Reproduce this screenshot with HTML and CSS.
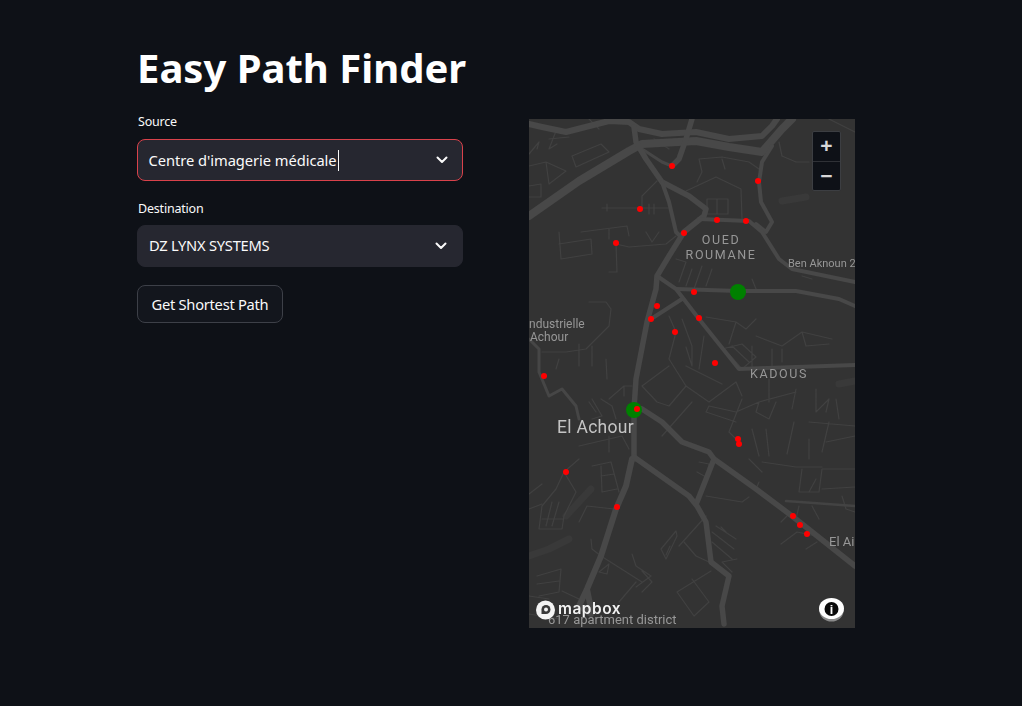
FILE: index.html
```html
<!DOCTYPE html>
<html lang="en">
<head>
<meta charset="utf-8">
<title>Easy Path Finder</title>
<link rel="stylesheet" href="styles.css">
</head>
<body>
<main class="app">
  <section class="controls">
    <h1 class="title">Easy Path Finder</h1>
    <div class="field">
      <label class="label">Source</label>
      <div class="select select-focus">
        <span class="value">Centre d'imagerie médicale</span><span class="caret"></span>
        <svg class="chevron" viewBox="0 0 12 8"><path d="M1.500 1.500 6 6l4.500-4.500" /></svg>
      </div>
    </div>
    <div class="field">
      <label class="label">Destination</label>
      <div class="select select-plain">
        <span class="value">DZ LYNX SYSTEMS</span>
        <svg class="chevron" viewBox="0 0 12 8"><path d="M1.500 1.500 6 6l4.500-4.500" /></svg>
      </div>
    </div>
    <button class="button">Get Shortest Path</button>
  </section>
  <section class="map">
    <svg class="map-svg" viewBox="0 0 326 509" width="326" height="509">
      <rect width="326" height="509" fill="#333333"/>
      <g class="soft">
      <g class="water">
        <path d="M37 397 62 370"/>
        <path d="M0 437 20 430 40 420"/>
        <path d="M253 82 277 78"/>
        <path d="M310 265 326 262"/>
      </g>
      <g class="minor">
        <path d="M43 37 47 48 80 33 72 25ZM0 47 17 43 20 65 37 52 17 43M0 67 12 65 12 78H0M0 35 10 23 8 30M27 12 20 30 28 25"/>
        <path d="M73 89H139M78 85V92M120 85V95M125 85V95M113 88V77L128 62"/>
        <path d="M30 113 32 140 63 135 62 120 30 125M52 113 98 107 100 117M87 125 88 153H80M87 125 100 128 137 125 147 117M117 113 123 123 130 113M80 110V120"/>
        <path d="M157 72 187 58 212 70 213 100M170 40 193 38 220 43 230 50M170 40 173 53 168 63M178 80H199V95H178ZM188 80V95"/>
        <path d="M250 23 253 37 267 43 280 43M300 0 326 13"/>
        <path d="M147 140 157 143 150 163M163 150 157 167M173 147 165 170M183 150 177 167M223 160 227 170M273 157 283 160"/>
        <path d="M60 183H77L82 190 80 207 57 230 37 233H13M50 225V247M63 227V247M77 240 78 260M80 280 95 267H103M95 267V277M72 280 83 287 87 300M60 283 67 293M30 240 27 250"/>
        <path d="M140 197 147 213 140 240 157 267 180 283 207 263 213 277M113 267 140 247M113 267 128 283 140 287 157 267M157 247 193 265M175 217 170 250M163 227V247L157 228M153 200 163 227"/>
        <path d="M177 198 207 203 217 210 227 200M193 230 213 225 227 238 213 250 197 232M203 227 220 243M207 203 200 225M227 217 253 227 273 213 303 220M253 230V243M273 213 277 227 300 225M243 230V250M223 227V250"/>
        <path d="M180 287 207 293 230 283 267 273M180 287 177 293 207 303M230 283 227 293 240 300 247 283M240 260V283M267 270 263 290M287 270V293L300 280 297 293M307 280 310 300M213 280 200 313 207 320M223 310 230 337M237 310 240 337"/>
        <path d="M163 283 133 317M50 327 93 317 100 330M80 317V333M63 280 73 297 63 300"/>
        <path d="M297 323 326 317M280 303 326 307M300 303 293 333M265 303 258 335M280 320V340"/>
        <path d="M50 340 35 353 27 370 13 387 10 410H33L35 397 47 373 35 353M23 383 17 407M30 383 23 407M13 400H35"/>
        <path d="M63 347 82 343 90 373M72 347 73 373 88 370M72 357 85 355M0 375 13 365M0 390 13 385"/>
        <path d="M58 387 85 390M58 387 50 403M170 343 180 345 177 358 168 353"/>
        <path d="M177 377 213 383 220 378M187 407 207 420M183 413 205 430M183 423 203 440M208 440 193 443 203 453M192 408 197 413M150 427 177 397"/>
        <path d="M132 430 147 412 148 417 137 440 132 430M141 427 137 436M155 423 167 437 180 443M148 473 182 452M148 473 165 497 180 483 163 460"/>
        <path d="M62 420 63 430 72 437 113 463M80 445 70 453 78 455 80 445M103 435 107 447 122 457 107 468M113 452 123 463 113 473M107 463 90 483"/>
        <path d="M8 457 32 450 30 473 10 477M8 465 30 462M33 472 50 480M0 477 20 480M0 495 30 500"/>
        <path d="M270 387 267 400M283 387 290 400M252 403 260 395M252 425 268 413 287 417M277 430 288 423"/>
        <path d="M273 350 270 373H290L293 350H326M287 360 280 373M293 370 326 368M313 377 317 390 326 393M233 343 267 348H293M220 340 233 353M230 363 227 370"/>
        <path d="M60 0 70 10M20 20 40 18M140 30 125 20M196 50 193 40"/>
      </g>
      <g class="service"><path d="M257 382 326 387"/></g>
      <g class="roads-thin">
        <path d="M0 220 10 230 10 253 20 277 33 270 47 287 50 300"/>
        <path d="M113 30 133 43 143 47"/>
      </g>
      <g class="roads">
        <path class="w6" d="M0 97 50 62 100 32 113 25 167 22 200 28 233 33 253 10 263 0"/>
        <path class="w5" d="M0 5 13 8 37 13 80 2 100 3 110 10 133 15 167 13 200 20 233 17 243 7 248 0"/>
        <path class="w4" d="M105 8 107 23 117 40 133 63 160 77 177 90 175 97 155 113 140 137 128 157 127 170 118 203 107 260 105 290 105 340"/>
        <path class="w5" d="M103 340 97 367 87 390 72 437 58 470 50 487 62 495M58 470 62 490"/>
        <path class="w4" d="M163 0 157 20 150 40 143 47"/>
        <path class="w3" d="M133 63 140 83 147 113 152 118"/>
        <path class="w3" d="M243 27 233 43 230 63 232 83 243 103 237 113 227 105"/>
        <path class="w3" d="M170 100 220 102 233 113 250 140 263 150 326 163"/>
        <path class="w3" d="M148 170 209 172 267 172 310 180 326 187"/>
        <path class="w3" d="M128 157 147 170 170 200 210 250 326 246"/>
        <path class="w3" d="M122 200 153 180"/>
        <path class="w4" d="M105 338 160 377 168 387 177 403 182 443 200 457 193 487 195 505"/>
        <path class="w4" d="M168 383 185 340 227 370 263 397 326 447"/>
        <path class="w4" d="M113 290 133 303 153 323 180 333 185 340"/>
      </g>
      <g class="labels">
        <text class="lbl lbl-spaced" x="192" y="125" text-anchor="middle">OUED</text>
        <text class="lbl lbl-spaced" x="192" y="140" text-anchor="middle">ROUMANE</text>
        <text class="lbl" x="259" y="148">Ben Aknoun 2</text>
        <text class="lbl lbl-wide" x="0" y="209">ndustrielle</text>
        <text class="lbl lbl-wide" x="1" y="222">Achour</text>
        <text class="lbl lbl-spaced" x="250" y="259" text-anchor="middle">KADOUS</text>
        <text class="lbl lbl-big" x="28" y="314">El Achour</text>
        <text class="lbl lbl-mid" x="300" y="427">El Ain</text>
        <text class="lbl lbl-mid" x="19" y="505">617 apartment district</text>
      </g>
      </g>
      <g class="green">
        <circle cx="209" cy="173" r="8"/>
        <circle cx="105" cy="291" r="8"/>
      </g>
      <g class="red">
        <circle cx="143" cy="47" r="3"/><circle cx="229" cy="62" r="3"/>
        <circle cx="111" cy="90" r="3"/><circle cx="188" cy="101" r="3"/>
        <circle cx="217" cy="102" r="3"/><circle cx="155" cy="114" r="3"/>
        <circle cx="87" cy="124" r="3"/><circle cx="165" cy="173" r="3"/>
        <circle cx="128" cy="187" r="3"/><circle cx="122" cy="200" r="3"/>
        <circle cx="170" cy="199" r="3"/><circle cx="146" cy="213" r="3"/>
        <circle cx="186" cy="244" r="3"/><circle cx="15" cy="257" r="3"/>
        <circle cx="108" cy="290" r="3"/><circle cx="209" cy="320" r="3"/>
        <circle cx="210" cy="325" r="3"/><circle cx="37" cy="353" r="3"/>
        <circle cx="88" cy="388" r="3"/><circle cx="264" cy="397" r="3"/>
        <circle cx="271" cy="406" r="3"/><circle cx="278" cy="415" r="3"/>
      </g>
      <g class="logo soft">
        <circle class="logo-ring" cx="16.500" cy="491" r="9.500"/>
        <path class="logo-mark" d="M12.500 495V490.500A4.500 4.500 0 1 1 17 495Z"/>
        <circle class="logo-dot" cx="17" cy="490.500" r="2"/>
        <text class="logo-text" x="29" y="495">mapbox</text>
      </g>
      <g class="info soft">
        <ellipse class="info-shadow" cx="302.500" cy="492" rx="12" ry="10.500"/>
        <ellipse class="info-ring" cx="302.500" cy="489.500" rx="12.500" ry="10.500"/>
        <circle class="info-disc" cx="302.500" cy="490" r="7"/>
        <text class="info-i" x="302.500" y="494.500" text-anchor="middle">i</text>
      </g>
    </svg>
    <div class="zoom">
      <button class="zoom-btn">+</button>
      <button class="zoom-btn">−</button>
    </div>
  </section>
</main>
</body>
</html>
```
FILE: styles.css
```css
* { box-sizing: border-box; }
html, body { margin: 0; height: 100%; }
body {
  background: #0e1117;
  color: #fafafa;
  font-family: "Noto Sans", "Open Sans", sans-serif;
  overflow: hidden;
}
.app {
  display: flex;
  align-items: flex-start;
  gap: 66px;
  padding: 0 0 0 137px;
}
.controls {
  width: 326px;
  display: flex;
  flex-direction: column;
  align-items: flex-start;
}
.title {
  margin: 40px 0 0;
  font-size: 40px;
  line-height: 56px;
  height: 56px;
  font-weight: 700;
  white-space: nowrap;
  color: #fff;
}
.field {
  width: 100%;
  margin-top: 17px;
}
.field + .field { margin-top: 19px; }
.label {
  display: block;
  font-size: 12.500px;
  line-height: 18px;
  height: 18px;
  margin-bottom: 8px;
  padding-left: 1px;
  letter-spacing: -0.200px;
}
.field + .field .label { margin-bottom: 7px; }
.select {
  display: flex;
  align-items: center;
  height: 42px;
  padding: 0 15px 0 11px;
  background: #262730;
  border-radius: 8px;
  border: 1px solid #262730;
  font-size: 14.700px;
  letter-spacing: -0.050px;
}
.select-plain { letter-spacing: -0.250px; padding-bottom: 2px; }
.select-plain .chevron { margin-top: 2px; }
.select-focus {
  border: 1.500px solid #d9424b;
  padding-left: 10.500px;
  padding-right: 14.500px;
}
.value { white-space: nowrap; }
.caret {
  width: 1px;
  height: 21px;
  margin-left: 1px;
  background: #fafafa;
}
.chevron {
  width: 12px;
  height: 8px;
  margin-left: auto;
  fill: none;
  stroke: #fafafa;
  stroke-width: 2;
  stroke-linecap: round;
  stroke-linejoin: round;
}
.button {
  margin-top: 18px;
  width: 146px;
  height: 38px;
  padding: 0;
  background: #13161d;
  color: #fafafa;
  border: 1px solid #3d4048;
  border-radius: 8px;
  font-family: inherit;
  font-size: 14.700px;
  letter-spacing: -0.270px;
}
.map {
  position: relative;
  width: 326px;
  height: 509px;
  margin-top: 119px;
  overflow: hidden;
}
.map-svg { display: block; }
.soft { filter: blur(0.500px); }
.roads, .roads-thin, .minor, .service, .water { fill: none; stroke-linejoin: round; stroke-linecap: round; }
.roads { stroke: #484848; stroke-width: 4; }
.roads-thin { stroke: #464646; stroke-width: 3; }
.minor { stroke: #414141; stroke-width: 1.200; }
.service { stroke: #434343; stroke-width: 2.500; }
.water { stroke: #393939; stroke-width: 7; }
.w3 { stroke-width: 4; }
.w4 { stroke-width: 5.500; }
.w5 { stroke-width: 6; }
.w6 { stroke-width: 8; }
.green { fill: #008000; }
.red { fill: #ff0000; }
.lbl {
  fill: #979797;
  font-family: Roboto, "Noto Sans", sans-serif;
  font-size: 11px;
}
.lbl-wide { font-size: 12px; }
.lbl-spaced { font-size: 12.500px; letter-spacing: 1.600px; }
.lbl-big { font-size: 17.500px; fill: #c4c4c4; letter-spacing: 0.300px; }
.lbl-mid { font-size: 13px; }
.logo-ring { fill: #f4f4f4; }
.logo-mark { fill: #3a3a3a; }
.logo-dot { fill: #f4f4f4; }
.logo-text {
  fill: #f2f2f2;
  font-family: Inter, "Liberation Sans", sans-serif;
  font-weight: 600;
  font-size: 15.500px;
  letter-spacing: 0.500px;
}
.info-shadow { fill: #8a8a8a; }
.info-ring { fill: #fff; }
.info-disc { fill: #0b0b0b; }
.info-i {
  fill: #fff;
  font-family: "Liberation Sans", sans-serif;
  font-weight: 700;
  font-size: 12.500px;
}
.zoom {
  position: absolute;
  top: 12px;
  right: 14px;
  width: 29px;
  display: flex;
  flex-direction: column;
  background: #0e1117;
  border: 1px solid #3c3e42;
  border-radius: 2px;
}
.zoom-btn {
  width: 27px;
  height: 29px;
  padding: 0 0 2px;
  background: transparent;
  border: 0;
  color: #d8d8d8;
  font-family: "Liberation Sans", sans-serif;
  font-weight: 700;
  font-size: 21px;
  line-height: 27px;
}
.zoom-btn + .zoom-btn { border-top: 1px solid #2f3136; }
```
